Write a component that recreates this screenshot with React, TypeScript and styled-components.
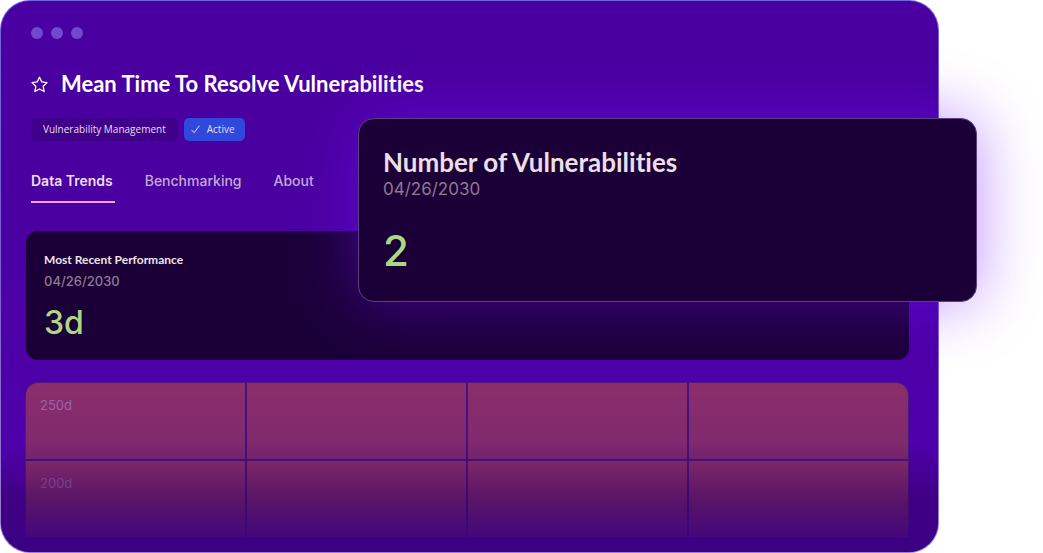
import React from "react";
import styled, { createGlobalStyle } from "styled-components";

const GlobalStyle = createGlobalStyle`
  *, *::before, *::after { box-sizing: border-box; }
  body { margin: 0; background: #fff; font-family: Inter, sans-serif; overflow-x: hidden; }
  h1, h2, p { margin: 0; }
`;

const Stage = styled.main`
  position: relative;
  overflow: hidden;
`;

const Window = styled.section`
  position: relative;
  width: 90%;
  padding: 26px 29px 15px 30px;
  border: 1px solid transparent;
  border-radius: 30px;
  background:
    linear-gradient(#4a00a0, #4a00a0 30%, #4e00aa 75%) padding-box,
    linear-gradient(#6f66e0, #7a60d0 50%, #9a80d0) border-box;

  &::after {
    content: "";
    position: absolute;
    left: 0;
    right: 0;
    bottom: 0;
    height: 108px;
    border-radius: 30px;
    pointer-events: none;
    background: linear-gradient(rgba(50, 0, 90, 0.02), rgba(50, 0, 90, 0.14) 15%, rgba(50, 0, 95, 0.5) 50%, rgba(58, 0, 126, 0.82) 85%, rgba(58, 0, 128, 0.95));
  }
`;

const Dots = styled.div`
  display: flex;
  gap: 8px;
`;

const Dot = styled.span`
  width: 12px;
  height: 12px;
  border-radius: 50%;
  background: #7049d0;
`;

const TitleRow = styled.header`
  display: flex;
  align-items: center;
  gap: 13px;
  margin-top: 29px;
  height: 32px;
`;

const StarButton = styled.button`
  display: flex;
  padding: 0;
  border: 0;
  background: none;
  color: #fff;
`;

const Title = styled.h1`
  font: 700 22px/32px Lato, sans-serif;
  font-variant-ligatures: none;
  color: #fff;
  white-space: nowrap;
`;

const Tags = styled.div`
  display: flex;
  gap: 6px;
  margin-top: 18px;
`;

const Tag = styled.span<{ $active?: boolean }>`
  display: flex;
  align-items: center;
  gap: 7px;
  height: 23px;
  padding: ${(p) => (p.$active ? "0 10px 0 7px" : "0 12px")};
  border-radius: 5px;
  background: ${(p) => (p.$active ? "#3048dc" : "#3f008a")};
  color: #e9dff0;
  font: 500 10px/23px "Open Sans", sans-serif;
  white-space: nowrap;
`;

const Tabs = styled.nav`
  display: flex;
  gap: 30px;
  margin-top: 28px;
`;

const Tab = styled.a<{ $current?: boolean }>`
  padding: 0 2px 8px 0;
  border-bottom: 2px solid ${(p) => (p.$current ? "#f7a1f0" : "transparent")};
  color: ${(p) => (p.$current ? "#eadff0" : "#c3aad6")};
  font: ${(p) => (p.$current ? 600 : 500)} 14px/24px Inter, sans-serif;
  text-decoration: none;
`;

const Card = styled.article`
  margin: 28px 0 0 -5px;
  padding: 19px 18px 15px;
  border-radius: 12px;
  background: #1b0038;
`;

const CardTitle = styled.h2`
  font: 700 12px/20px Lato, sans-serif;
  color: #efe3ea;
`;

const CardDate = styled.p`
  font: 500 13px/22px Inter, sans-serif;
  color: #94788f;
`;

const CardValue = styled.p`
  margin-top: 9px;
  font: 500 32px/44px Inter, sans-serif;
  color: #afd682;
`;

const Chart = styled.div`
  display: grid;
  grid-template-columns: repeat(4, 1fr);
  grid-auto-rows: 76px;
  gap: 2px;
  margin: 22px 0 0 -6px;
  border: 1px solid #4a1a80;
  border-bottom: 0;
  border-radius: 13px 13px 0 0;
  background: #44127f;
  overflow: hidden;
`;

const Cell = styled.div`
  padding: 11px 14px;
  background: linear-gradient(#8b2e6b, #7d2870);
  color: #9b62ab;
  font: 400 13px/22px Inter, sans-serif;
`;

const Popup = styled.article`
  position: absolute;
  top: 118px;
  left: 358px;
  right: 66px;
  padding: 27px 24px 22px;
  border: 1px solid #5d3f80;
  border-radius: 16px;
  background: #1b0038;
  box-shadow: 0 0 64px rgba(115, 10, 255, 0.46);
`;

const PopupTitle = styled.h2`
  font: 700 26px/32px Lato, sans-serif;
  font-variant-ligatures: none;
  color: #eadfe5;
`;

const PopupDate = styled.p`
  font: 400 17px/22px Inter, sans-serif;
  color: #94788f;
`;

const PopupValue = styled.p`
  margin-top: 23px;
  font: 500 42px/56px Inter, sans-serif;
  color: #afd682;
`;

const labels = ["250d", "", "", "", "200d", "", "", ""];

export default function App() {
  return (
    <>
      <GlobalStyle />
      <Stage>
        <Window>
          <Dots>
            <Dot />
            <Dot />
            <Dot />
          </Dots>
          <TitleRow>
            <StarButton aria-label="Favorite">
              <svg width="17" height="17" viewBox="0 0 17 17" fill="none" stroke="currentColor" strokeWidth="1.3" strokeLinejoin="round">
                <path d="M8.5 1.2 10.8 5.9 16 6.6 12.2 10.3 13.1 15.5 8.5 13 3.9 15.5 4.8 10.3 1 6.6 6.2 5.9Z" />
              </svg>
            </StarButton>
            <Title>Mean Time To Resolve Vulnerabilities</Title>
          </TitleRow>
          <Tags>
            <Tag>Vulnerability Management</Tag>
            <Tag $active>
              <svg width="9" height="9" viewBox="0 0 9 9" fill="none" stroke="currentColor" strokeWidth="1" strokeLinecap="round" strokeLinejoin="round">
                <path d="M0.8 5.2 3.1 7.6 8.2 1" />
              </svg>
              Active
            </Tag>
          </Tags>
          <Tabs>
            <Tab href="#trends" $current>Data Trends</Tab>
            <Tab href="#benchmarking">Benchmarking</Tab>
            <Tab href="#about">About</Tab>
          </Tabs>
          <Card>
            <CardTitle>Most Recent Performance</CardTitle>
            <CardDate>04/26/2030</CardDate>
            <CardValue>3d</CardValue>
          </Card>
          <Chart>
            {labels.map((label, i) => (
              <Cell key={i}>{label}</Cell>
            ))}
          </Chart>
        </Window>
        <Popup>
          <PopupTitle>Number of Vulnerabilities</PopupTitle>
          <PopupDate>04/26/2030</PopupDate>
          <PopupValue>2</PopupValue>
        </Popup>
      </Stage>
    </>
  );
}
